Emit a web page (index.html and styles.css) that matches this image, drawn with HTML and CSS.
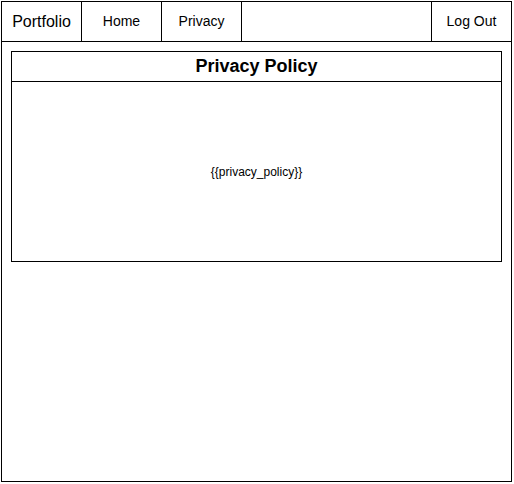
FILE: index.html
```html
<!DOCTYPE html>
<html lang="en">
<head>
  <meta charset="UTF-8" />
  <title>Privacy</title>
  <link rel="stylesheet" href="styles.css">
</head>
<body>
  <div class="page">
    <nav class="nav">
      <div class="nav-item brand">Portfolio</div>
      <div class="nav-item">Home</div>
      <div class="nav-item">Privacy</div>
      <div class="nav-spacer"></div>
      <div class="nav-item logout">Log Out</div>
    </nav>

    <div class="content">
      <div class="panel">
        <h2 class="panel-title">Privacy Policy</h2>
        <div class="panel-body">{{privacy_policy}}</div>
      </div>
    </div>
  </div>
</body>
</html>
```

FILE: styles.css
```css
body {
  margin: 0;
  padding: 0;
  background: #fff;
  color: #000;
  font-family: "Liberation Sans", Arial, sans-serif;
}
.page {
  box-sizing: border-box;
  margin: 1px 0 0 1px;
  width: 511px;
  height: 481px;
  border: 1px solid #000;
  display: flex;
  flex-direction: column;
}
.nav {
  display: flex;
  height: 40px;
  border-bottom: 1px solid #000;
  box-sizing: border-box;
}
.nav-item {
  box-sizing: border-box;
  width: 80px;
  padding-bottom: 1px;
  border-right: 1px solid #000;
  display: flex;
  align-items: center;
  justify-content: center;
  font-size: 14px;
}
.brand {
  font-size: 16px;
  padding-bottom: 0;
}
.nav-spacer {
  flex: 1;
  border-right: 1px solid #000;
}
.logout {
  width: 79px;
  border-right: none;
}
.content {
  padding: 9px;
}
.panel {
  border: 1px solid #000;
}
.panel-title {
  margin: 0;
  height: 30px;
  box-sizing: border-box;
  border-bottom: 1px solid #000;
  display: flex;
  align-items: center;
  justify-content: center;
  font-size: 18px;
  font-weight: bold;
}
.panel-body {
  height: 179px;
  display: flex;
  align-items: center;
  justify-content: center;
  font-size: 12px;
}
```
